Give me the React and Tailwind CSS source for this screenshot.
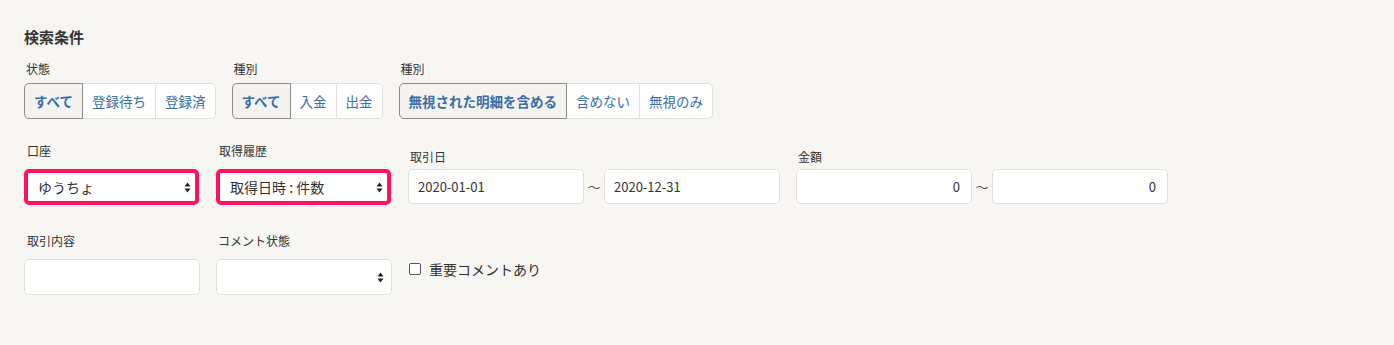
import React from "react";

const font = { fontFamily: '"Noto Sans CJK JP", "Noto Sans", sans-serif' };

function Label({ children, className = "" }) {
  return <div className={`text-[12px] leading-4 text-[#333] ${className}`}>{children}</div>;
}

function ButtonGroup({ items }) {
  return (
    <div className="flex h-[36px]">
      {items.map((item, i) => (
        <button
          key={item.label}
          className={[
            "flex items-center px-[9px] text-[13.5px] text-[#3a6ea5] border",
            i === 0 ? "rounded-l-[5px]" : "-ml-px",
            i === items.length - 1 ? "rounded-r-[5px]" : "",
            item.active
              ? "relative z-10 bg-[#f5f3ef] border-[#8e8c88] font-bold"
              : "bg-white border-[#e3dfd8]",
          ].join(" ")}
        >
          {item.label}
        </button>
      ))}
    </div>
  );
}

function Arrows() {
  return (
    <svg width="7" height="11" viewBox="0 0 7 11" className="shrink-0">
      <path d="M3.5 0.5 L6.5 4.5 H0.5 Z" fill="#222" />
      <path d="M3.5 10.5 L6.5 6.5 H0.5 Z" fill="#222" />
    </svg>
  );
}

function Select({ value, highlight = false }) {
  if (highlight) {
    return (
      <div className="flex h-[36px] w-[175px] items-center justify-between rounded-[5px] border-4 border-[#ff1060] bg-white pl-[10px] pr-[4px] text-[14px] text-[#333]">
        <span>{value}</span>
        <Arrows />
      </div>
    );
  }
  return (
    <div className="flex h-[36px] w-[176px] items-center justify-between rounded-[5px] border border-[#e3dfd8] bg-white pl-[12px] pr-[7px] text-[14px] text-[#333]">
      <span>{value}</span>
      <Arrows />
    </div>
  );
}

function Input({ value = "", right = false, h = "h-[35px]" }) {
  return (
    <div
      className={`flex ${h} w-[176px] items-center rounded-[5px] border border-[#e3dfd8] bg-white px-[9px] text-[13px] text-[#333] ${
        right ? "justify-end pr-[11px]" : ""
      }`}
    >
      {value}
    </div>
  );
}

function Tilde() {
  return <span className="flex w-[20px] justify-center pt-[8px] text-[13px] text-[#555]">〜</span>;
}

export default function App() {
  return (
    <div className="min-h-[345px] bg-[#f7f6f3] pl-[24px] pt-[27px]" style={font}>
      <h2 className="text-[15px] font-bold leading-5 text-[#333]">検索条件</h2>

      <div className="mt-[14px] flex gap-[16px]">
        <div>
          <Label className="mb-[6px] pl-[2px]">状態</Label>
          <ButtonGroup
            items={[
              { label: "すべて", active: true },
              { label: "登録待ち" },
              { label: "登録済" },
            ]}
          />
        </div>
        <div>
          <Label className="mb-[6px] pl-[2px]">種別</Label>
          <ButtonGroup
            items={[
              { label: "すべて", active: true },
              { label: "入金" },
              { label: "出金" },
            ]}
          />
        </div>
        <div>
          <Label className="mb-[6px] pl-[2px]">種別</Label>
          <ButtonGroup
            items={[
              { label: "無視された明細を含める", active: true },
              { label: "含めない" },
              { label: "無視のみ" },
            ]}
          />
        </div>
      </div>

      <div className="mt-[24px] flex gap-[16px]">
        <div className="w-[176px]">
          <Label className="mb-[10px] pl-[3px]">口座</Label>
          <Select value="ゆうちょ" highlight />
        </div>
        <div className="w-[176px]">
          <Label className="mb-[10px] pl-[3px]">取得履歴</Label>
          <Select value="取得日時 : 件数" highlight />
        </div>
        <div>
          <Label className="mb-[4px] mt-[6px] pl-[2px]">取引日</Label>
          <div className="flex">
            <Input value="2020-01-01" />
            <Tilde />
            <Input value="2020-12-31" />
          </div>
        </div>
        <div>
          <Label className="mb-[4px] mt-[6px] pl-[2px]">金額</Label>
          <div className="flex">
            <Input value="0" right />
            <Tilde />
            <Input value="0" right />
          </div>
        </div>
      </div>

      <div className="mt-[28px] flex gap-[16px]">
        <div>
          <Label className="mb-[10px] pl-[3px]">取引内容</Label>
          <Input h="h-[36px]" />
        </div>
        <div>
          <Label className="mb-[10px] pl-[2px]">コメント状態</Label>
          <Select value="" />
        </div>
        <label className="mt-[28px] flex h-[16px] items-center gap-[8px] pl-[1px] text-[14px] text-[#333]">
          <span className="h-[12px] w-[12px] rounded-[2px] border border-[#555] bg-white" />
          <span>重要コメントあり</span>
        </label>
      </div>
    </div>
  );
}
